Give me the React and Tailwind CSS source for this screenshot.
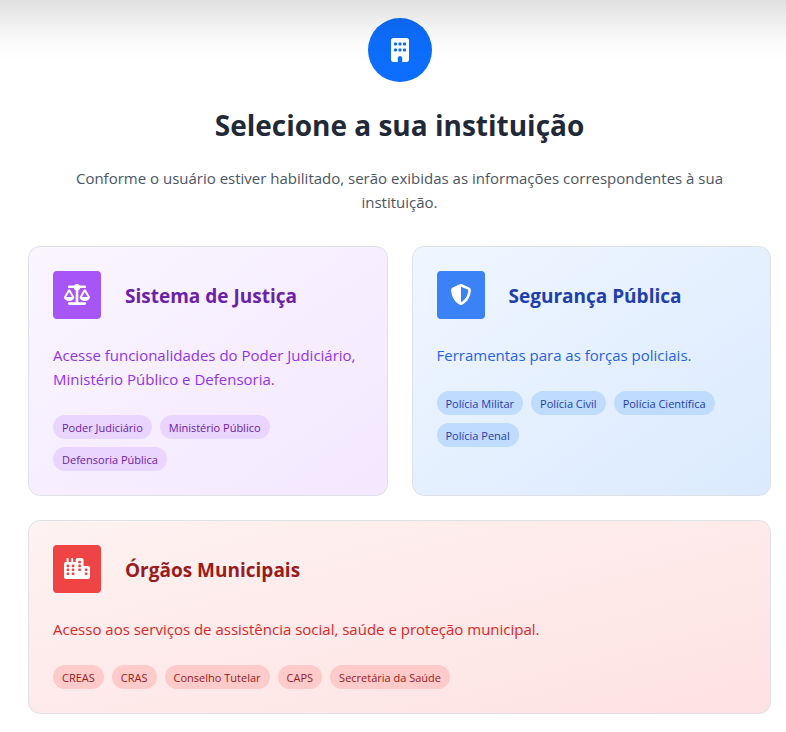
import { FaBuilding, FaScaleBalanced, FaShieldHalved, FaCity } from "react-icons/fa6";

const institutions = [
  {
    name: "Sistema de Justiça",
    description: "Acesse funcionalidades do Poder Judiciário, Ministério Público e Defensoria.",
    tags: ["Poder Judiciário", "Ministério Público", "Defensoria Pública"],
    Icon: FaScaleBalanced,
    card: "from-[#faf5ff] to-[#f3e8ff]",
    tile: "bg-[#a855f7]",
    title: "text-[#6b21a8]",
    text: "text-[#9333ea]",
    tag: "bg-[#e9d5ff] text-[#6b21a8]",
  },
  {
    name: "Segurança Pública",
    description: "Ferramentas para as forças policiais.",
    tags: ["Polícia Militar", "Polícia Civil", "Polícia Científica", "Polícia Penal"],
    Icon: FaShieldHalved,
    card: "from-[#eff6ff] to-[#dbeafe]",
    tile: "bg-[#3b82f6]",
    title: "text-[#1e40af]",
    text: "text-[#2563eb]",
    tag: "bg-[#bfdbfe] text-[#1e40af]",
  },
  {
    name: "Órgãos Municipais",
    description: "Acesso aos serviços de assistência social, saúde e proteção municipal.",
    tags: ["CREAS", "CRAS", "Conselho Tutelar", "CAPS", "Secretária da Saúde"],
    Icon: FaCity,
    card: "from-[#fef2f2] to-[#fee2e2] sm:col-span-2",
    tile: "bg-[#ef4444]",
    title: "text-[#991b1b]",
    text: "text-[#dc2626]",
    tag: "bg-[#fecaca] text-[#991b1b]",
  },
];

function InstitutionCard({ name, description, tags, Icon, card, tile, title, text, tag }) {
  return (
    <a
      href="#"
      className={`flex flex-col gap-6 rounded-xl border border-[#dee2e6] bg-linear-to-br p-6 ${card}`}
    >
      <div className="flex items-center gap-6">
        <span className={`flex size-12 shrink-0 items-center justify-center rounded pb-0.5 text-white ${tile}`}>
          <Icon className="h-[21px] w-[26px]" />
        </span>
        <h2 className={`pt-0.5 text-[19px] leading-6 font-bold ${title}`}>{name}</h2>
      </div>
      <p className={`text-[15px] leading-6 ${text}`}>{description}</p>
      <ul className="flex flex-wrap gap-2">
        {tags.map((label) => (
          <li key={label} className={`rounded-full px-[9px] pt-[5px] pb-[3px] text-[11px] leading-4 ${tag}`}>
            {label}
          </li>
        ))}
      </ul>
    </a>
  );
}

export default function App() {
  return (
    <div className="relative min-h-screen overflow-hidden bg-white font-['Segoe_UI','Open_Sans','Noto_Sans',sans-serif]">
      <div className="pointer-events-none absolute -inset-x-16 -top-20 z-10 h-20 shadow-[0_16px_48px_rgba(0,0,0,0.16)]" />
      <main className="pt-[18px] pr-[15px] pb-[18px] pl-7">
        <header className="mb-8 flex flex-col items-center text-center">
          <span className="mb-6 flex size-16 items-center justify-center rounded-full bg-[#0d6efd] text-white">
            <FaBuilding className="h-6 w-[18px]" />
          </span>
          <h1 className="mb-[22px] text-[28px] leading-[38px] font-bold text-[#1f2937]">Selecione a sua instituição</h1>
          <p className="max-w-2xl text-[15px] leading-6 text-[#4b5563]">
            Conforme o usuário estiver habilitado, serão exibidas as informações correspondentes à sua instituição.
          </p>
        </header>
        <div className="grid gap-6 sm:grid-cols-2">
          {institutions.map((institution) => (
            <InstitutionCard key={institution.name} {...institution} />
          ))}
        </div>
      </main>
    </div>
  );
}
